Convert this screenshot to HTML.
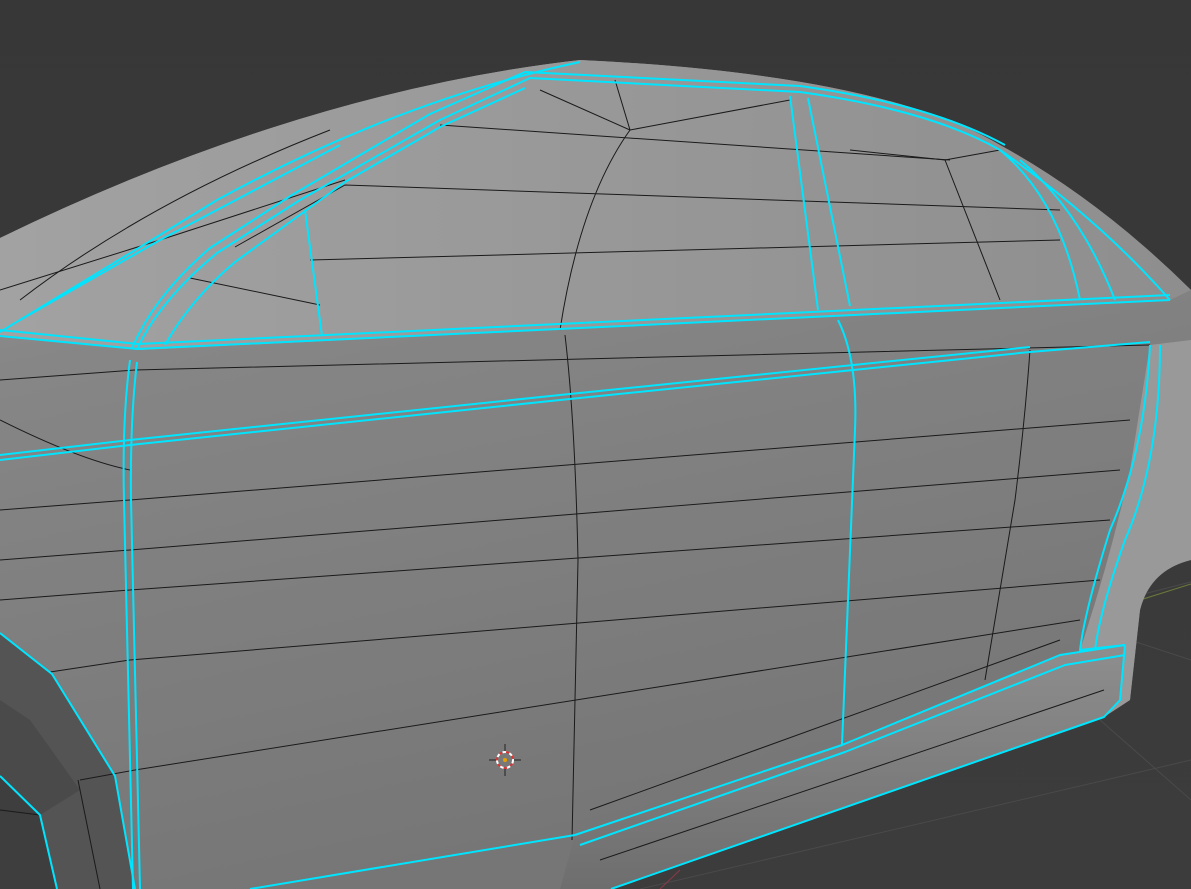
<!DOCTYPE html>
<html><head><meta charset="utf-8"><style>
html,body{margin:0;padding:0;background:#3a3a3a;overflow:hidden}
svg{display:block}
</style></head><body>
<svg width="1191" height="889" viewBox="0 0 1191 889" xmlns="http://www.w3.org/2000/svg">
<defs>
<linearGradient id="bg" x1="0" y1="0" x2="0" y2="1"><stop offset="0" stop-color="#373737"/><stop offset="1" stop-color="#3c3c3c"/></linearGradient>
<linearGradient id="body" x1="0" y1="0" x2="0.3" y2="1"><stop offset="0" stop-color="#969696"/><stop offset="0.35" stop-color="#868686"/><stop offset="1" stop-color="#767676"/></linearGradient>
<linearGradient id="roof" x1="0" y1="0" x2="1" y2="0"><stop offset="0" stop-color="#a2a2a2"/><stop offset="1" stop-color="#8e8e8e"/></linearGradient>
<linearGradient id="sill" x1="0" y1="0" x2="0" y2="1"><stop offset="0" stop-color="#8e8e8e"/><stop offset="1" stop-color="#6e6e6e"/></linearGradient>
</defs>
<rect width="1191" height="889" fill="url(#bg)"/>
<g stroke="#4a4a4a" stroke-width="1">
<line x1="1120" y1="600" x2="1191" y2="582"/><line x1="1130" y1="640" x2="1191" y2="660"/><line x1="1100" y1="720" x2="1191" y2="800"/><line x1="640" y1="889" x2="1191" y2="760"/>
</g>
<line x1="1140" y1="600" x2="1191" y2="584" stroke="#6a7a3a"/>
<line x1="660" y1="889" x2="680" y2="870" stroke="#8a3a4a"/>
<path d="M0,238 Q300,92 580,60 Q880,74 1000,145 Q1100,200 1191,290 L1191,560 Q1150,570 1140,610 L1130,700 L1104,717 L611,889 L0,889 Z" fill="url(#body)"/>
<path d="M0,238 Q300,92 580,60 Q880,74 1000,145 Q1100,200 1191,290 L1170,300 L140,350 L0,335 Z" fill="url(#roof)"/>
<path d="M1150,345 L1191,340 L1191,560 Q1150,570 1140,610 L1130,700 L1104,717 L1080,650 Q1110,560 1130,470 Z" fill="#999"/>
<path d="M575,835 L842,745 L1060,655 L1125,645 L1120,700 L1104,717 L611,889 L560,889 Z" fill="url(#sill)"/>
<path d="M0,633 L52,674 L115,776 L135,889 L0,889 Z" fill="#545454"/>
<path d="M0,776 L40,815 L57,889 L0,889 Z" fill="#3e3e3e"/>
<path d="M0,700 L30,720 L80,790 L40,815 L0,776 Z" fill="#4a4a4a"/>
<g stroke="#1a1a1a" stroke-width="1" fill="none">
<path d="M0,380 L135,370 L1150,345"/>
<path d="M0,510 L130,500 L1130,420"/>
<path d="M0,560 L130,550 L1120,470"/>
<path d="M0,600 L130,590 L1110,520"/>
<path d="M50,672 L130,660 L1100,580"/>
<path d="M80,780 L135,770 L1080,620"/>
<path d="M565,335 Q575,420 578,560 L572,840"/>
<path d="M1030,350 Q1025,420 1015,500 L985,680"/>
<path d="M560,330 Q580,200 630,130 L615,80"/>
<path d="M630,130 L790,100"/><path d="M540,90 L630,130"/>
<path d="M310,260 L1060,240"/><path d="M235,247 L345,185 L1060,210"/>
<path d="M440,125 L950,160"/><path d="M190,278 L320,305"/>
<path d="M850,150 L945,160 L1000,150"/><path d="M945,160 L1000,300"/>
<path d="M0,290 L160,240 L345,180"/><path d="M20,300 Q150,200 330,130"/>
<path d="M0,420 Q80,460 130,470"/>
<path d="M0,810 L40,815"/><path d="M78,780 L100,889"/>
<path d="M600,860 L1104,690"/><path d="M590,810 L1060,640"/>
</g>
<g stroke="#00e5ff" stroke-width="2" fill="none" stroke-linejoin="round">
<path d="M0,336 L137,349 L1170,300"/>
<path d="M0,330 L138,344 L1170,295"/>
<path d="M0,460 L130,445 L560,400 L1030,352 L1150,342"/>
<path d="M0,455 L130,440 L560,395 L1030,347"/>
<path d="M137,349 Q160,300 217,253 L300,200 L440,120 L530,78 L800,92 Q930,110 1000,150 Q1100,220 1170,300"/>
<path d="M132,348 Q155,295 210,248 L292,195 L430,114 L525,72 L800,86 Q930,104 1005,145"/>
<path d="M165,345 Q190,300 235,262 L345,182 L440,127 L525,88"/>
<path d="M305,210 L322,336"/>
<path d="M130,360 Q122,420 124,500 L133,889"/>
<path d="M137,362 Q130,420 131,500 L140,889"/>
<path d="M838,320 Q858,360 855,430 L842,745"/>
<path d="M790,96 L818,310"/><path d="M808,98 L850,306"/>
<path d="M1000,150 Q1060,200 1080,300"/><path d="M1020,160 Q1080,210 1115,300"/>
<path d="M0,332 L160,235 L217,200 Q400,100 580,62"/>
<path d="M20,320 L160,240 L340,145"/>
<path d="M1150,345 Q1145,450 1110,530 Q1085,610 1080,650 L1125,645"/>
<path d="M1160,345 Q1160,460 1125,540 Q1100,610 1095,650"/>
<path d="M575,835 L842,745 L1060,655 L1125,645"/>
<path d="M580,845 L845,752 L1065,665 L1125,655"/>
<path d="M611,889 L1104,717 L1120,700 L1125,645"/>
<path d="M250,889 L575,835"/>
<path d="M0,633 L52,674 L115,776 L135,889"/>
<path d="M0,776 L40,815 L57,889"/>
</g>
<g transform="translate(505,760)">
<circle r="8" fill="none" stroke="#fff" stroke-width="2" stroke-dasharray="4 3"/>
<circle r="8" fill="none" stroke="#d33" stroke-width="2" stroke-dasharray="3 4" stroke-dashoffset="3.5"/>
<line x1="-16" y1="0" x2="-9" y2="0" stroke="#222"/><line x1="9" y1="0" x2="16" y2="0" stroke="#222"/>
<line x1="0" y1="-16" x2="0" y2="-9" stroke="#222"/><line x1="0" y1="9" x2="0" y2="16" stroke="#222"/>
<circle r="2" fill="#e8a000"/>
</g>
</svg>
</body></html>
